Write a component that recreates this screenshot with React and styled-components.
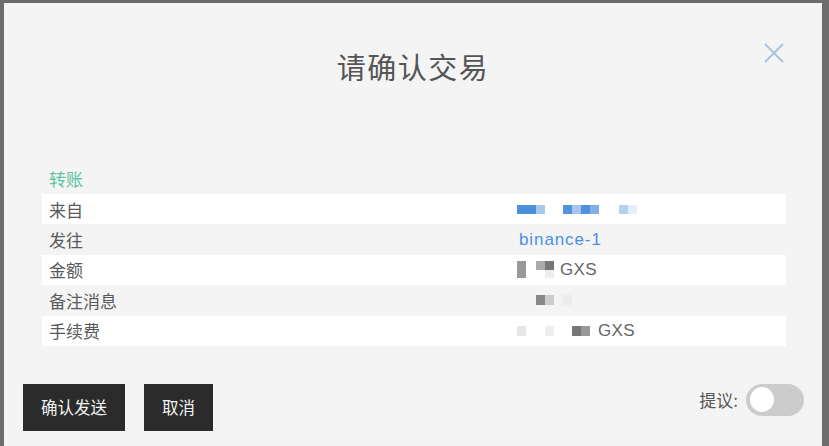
import React from "react";
import styled, { createGlobalStyle } from "styled-components";

const Global = createGlobalStyle`
  html, body { margin: 0; padding: 0; }
  body {
    background: #6c6c6c;
    font-family: "Liberation Sans", "Noto Sans CJK SC", sans-serif;
    overflow: hidden;
  }
`;

const Page = styled.div`
  height: 446px;
  padding: 3px 7px 0 4px;
  box-sizing: border-box;
`;

const Modal = styled.div`
  position: relative;
  height: 100%;
  background: #f4f4f4;
  box-sizing: border-box;
  padding: 43px 0 0;
  display: flex;
  flex-direction: column;
`;

const Title = styled.h1`
  margin: 0;
  text-align: center;
  font-family: "Noto Sans CJK SC", sans-serif;
  font-weight: 400;
  font-size: 29px;
  line-height: 40px;
  color: #555;
  letter-spacing: 1.5px;
`;

const Close = styled.button`
  position: absolute;
  top: 37px;
  right: 35px;
  width: 26px;
  height: 26px;
  padding: 0;
  border: 0;
  background: none;
  display: flex;
  align-items: center;
  justify-content: center;
`;

const Body = styled.div`
  margin: 81px 36px 0 38px;
`;

const Section = styled.div`
  font-family: "Noto Sans CJK SC", sans-serif;
  font-size: 17px;
  line-height: 24px;
  color: #5cc3a0;
  padding-left: 7px;
  margin-bottom: 3px;
`;

const Row = styled.div`
  display: grid;
  grid-template-columns: 468px 1fr;
  align-items: center;
  height: 30.4px;
  padding-left: 7px;
  background: ${(p) => (p.$alt ? "#f4f4f4" : "#ffffff")};
`;

const Label = styled.div`
  font-family: "Noto Sans CJK SC", sans-serif;
  font-size: 17px;
  color: #5a5a5a;
`;

const Value = styled.div`
  display: flex;
  align-items: center;
  font-size: 17px;
  letter-spacing: ${(p) => (p.$link ? "0.9px" : "0.4px")};
  padding-left: ${(p) => (p.$link ? "2px" : "0")};
  color: ${(p) => (p.$link ? "#4a90e2" : "#666")};
  font-family: "Liberation Sans", sans-serif;
`;

const Unit = styled.span`
  margin-left: ${(p) => p.$gap}px;
`;

const Footer = styled.div`
  margin-top: 38px;
  padding: 0 18px 0 19px;
  display: flex;
  justify-content: space-between;
  align-items: flex-start;
`;

const Buttons = styled.div`
  display: flex;
  gap: 19px;
`;

const Button = styled.button`
  height: 47px;
  padding: 0 18px;
  border: 0;
  border-radius: 0;
  background: #2b2b2b;
  color: #f2f2f2;
  font-family: "Noto Sans CJK SC", sans-serif;
  font-size: 16.5px;
`;

const ToggleGroup = styled.div`
  display: flex;
  align-items: center;
  gap: 8px;
`;

const ToggleLabel = styled.span`
  font-family: "Noto Sans CJK SC", sans-serif;
  font-size: 17px;
  color: #555;
`;

const Track = styled.div`
  width: 58px;
  height: 32px;
  border-radius: 16px;
  background: #cccccc;
  display: flex;
  align-items: center;
  padding: 0 4px;
  box-sizing: border-box;
`;

const Knob = styled.div`
  width: 24px;
  height: 25px;
  border-radius: 50%;
  background: #fff;
`;

const Pixels = ({ w, h, cells }) => (
  <svg width={w} height={h} viewBox={`0 0 ${w} ${h}`}>
    {cells.map(([x, y, cw, ch, c], i) => (
      <rect key={i} x={x} y={y} width={cw} height={ch} fill={c} />
    ))}
  </svg>
);

export default function App() {
  return (
    <>
      <Global />
      <Page>
        <Modal>
          <Title>请确认交易</Title>
          <Close aria-label="close">
            <svg width="20" height="20" viewBox="0 0 20 20">
              <path d="M1 1 L19 19 M19 1 L1 19" stroke="#a9c3dc" strokeWidth="2" />
            </svg>
          </Close>
          <Body>
            <Section>转账</Section>
            <Row>
              <Label>来自</Label>
              <Value>
                <Pixels
                  w={121}
                  h={9}
                  cells={[
                    [0, 0, 19, 9, "#4c8fdc"],
                    [19, 0, 9, 9, "#a9c8ef"],
                    [46, 0, 9, 9, "#5294dc"],
                    [55, 0, 9, 9, "#a6c6ee"],
                    [64, 0, 9, 9, "#4f91dc"],
                    [73, 0, 9, 9, "#80aee6"],
                    [102, 0, 9, 9, "#b6d0f0"],
                    [111, 0, 9, 9, "#e6eefa"],
                  ]}
                />
              </Value>
            </Row>
            <Row $alt>
              <Label>发往</Label>
              <Value $link>binance-1</Value>
            </Row>
            <Row>
              <Label>金额</Label>
              <Value>
                <Pixels
                  w={37}
                  h={17}
                  cells={[
                    [0, 0, 9, 17, "#999"],
                    [19, 0, 9, 9, "#aaa"],
                    [28, 0, 9, 9, "#777"],
                    [28, 9, 9, 8, "#eee"],
                  ]}
                />
                <Unit $gap={6}>GXS</Unit>
              </Value>
            </Row>
            <Row $alt>
              <Label>备注消息</Label>
              <Value>
                <Pixels
                  w={55}
                  h={10}
                  cells={[
                    [19, 0, 9, 10, "#888"],
                    [28, 0, 9, 10, "#ccc"],
                    [46, 0, 9, 10, "#ececec"],
                  ]}
                />
              </Value>
            </Row>
            <Row>
              <Label>手续费</Label>
              <Value>
                <Pixels
                  w={73}
                  h={10}
                  cells={[
                    [0, 0, 9, 10, "#e6e6e6"],
                    [28, 0, 9, 10, "#eee"],
                    [55, 0, 9, 10, "#777"],
                    [64, 0, 9, 10, "#999"],
                  ]}
                />
                <Unit $gap={8}>GXS</Unit>
              </Value>
            </Row>
          </Body>
          <Footer>
            <Buttons>
              <Button>确认发送</Button>
              <Button>取消</Button>
            </Buttons>
            <ToggleGroup>
              <ToggleLabel>提议:</ToggleLabel>
              <Track>
                <Knob />
              </Track>
            </ToggleGroup>
          </Footer>
        </Modal>
      </Page>
    </>
  );
}
